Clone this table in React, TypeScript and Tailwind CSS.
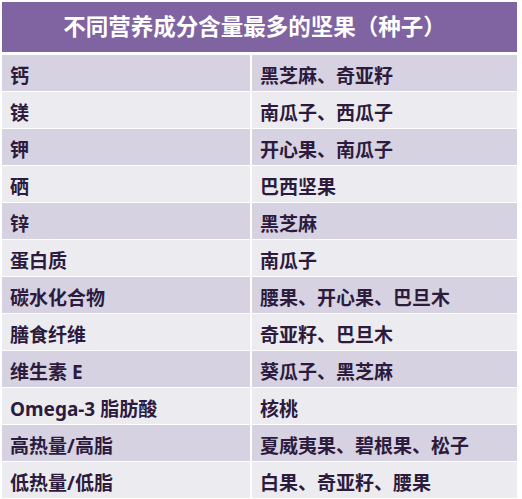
const rows: [string, string][] = [
  ['钙', '黑芝麻、奇亚籽'],
  ['镁', '南瓜子、西瓜子'],
  ['钾', '开心果、南瓜子'],
  ['硒', '巴西坚果'],
  ['锌', '黑芝麻'],
  ['蛋白质', '南瓜子'],
  ['碳水化合物', '腰果、开心果、巴旦木'],
  ['膳食纤维', '奇亚籽、巴旦木'],
  ['维生素 E', '葵瓜子、黑芝麻'],
  ['Omega-3 脂肪酸', '核桃'],
  ['高热量/高脂', '夏威夷果、碧根果、松子'],
  ['低热量/低脂', '白果、奇亚籽、腰果'],
];

export default function App() {
  return (
    <div
      className="w-[522px] h-[499px] overflow-hidden bg-white pl-[2px] pt-[2px]"
      style={{ fontFamily: '"Noto Sans", "Noto Sans CJK SC", sans-serif' }}
    >
      <div className="w-[515px]">
        {/* title bar */}
        <div className="h-[50px] bg-[#8064a2] flex items-center justify-center pr-[10px]">
          <h1 className="text-[22.5px] font-bold text-white">
            不同营养成分含量最多的坚果（种子）
          </h1>
        </div>

        {/* table rows */}
        <div className="mt-[3px] flex flex-col gap-[2px] text-[#2d1b3e]">
          {rows.map(([nutrient, nuts], i) => (
            <div key={nutrient} className="grid grid-cols-[248px_265px] gap-[2px] h-[35px]">
              <div
                className={`flex items-center pt-[7px] pl-[8px] text-[19px] font-bold ${
                  i % 2 === 0 ? 'bg-[#d6d2e1]' : 'bg-[#ecebf0]'
                }`}
              >
                {nutrient}
              </div>
              <div
                className={`flex items-center pt-[7px] pl-[8px] text-[19px] font-bold ${
                  i % 2 === 0 ? 'bg-[#d6d2e1]' : 'bg-[#ecebf0]'
                }`}
              >
                {nuts}
              </div>
            </div>
          ))}
        </div>
      </div>
    </div>
  );
}
